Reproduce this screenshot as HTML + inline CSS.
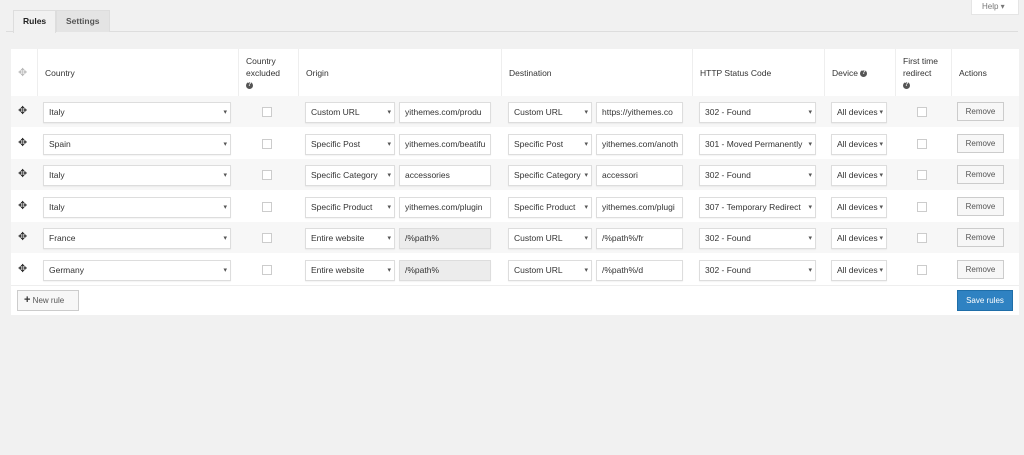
<!DOCTYPE html>
<html><head><meta charset="utf-8"><style>
*{box-sizing:border-box;margin:0;padding:0}
body{width:1024px;height:455px;background:#f1f1f1;font-family:"Liberation Sans",sans-serif;font-size:8.5px;color:#444;position:relative;overflow:hidden}
.a{position:absolute}
.tab{position:absolute;top:10px;height:22px;border:1px solid #ddd;border-bottom:none;line-height:21px;font-weight:bold;font-size:8.5px;padding:0 9px}
.line{position:absolute;left:6px;right:6px;top:31px;border-top:1px solid #ddd}
.tbl{position:absolute;left:11px;top:49px;width:1008px;height:266px;background:#fff}
.hd{position:absolute;top:0;height:47px;border-left:1px solid #eee;padding-left:7px;display:flex;align-items:center;line-height:12px;color:#333}
.q{display:inline-block;width:7px;height:7px;border-radius:50%;background:#555;color:#fff;font-size:6px;line-height:7px;text-align:center;font-weight:bold;vertical-align:middle}
.row{position:absolute;left:11px;width:1008px;height:31px}
.g{background:#f7f7f7}
.s,.i{position:absolute;top:6px;height:21px;background:#fff;border:1px solid #ddd;line-height:19px;padding-left:5px;white-space:nowrap;overflow:hidden;color:#333;box-shadow:0 1px 1px rgba(0,0,0,.05)}
.s{padding-right:10px}
.s:after{content:"▾";position:absolute;right:3px;top:0;font-size:7px;color:#555;background:#fff;padding-left:1px}
.i.dis{background:#ececec}
.cb{position:absolute;top:11px;width:10px;height:10px;border:1px solid #ccc;background:#fff}
.rm{position:absolute;top:6px;left:946px;width:47px;height:19px;border:1px solid #ccc;background:#f7f7f7;text-align:center;line-height:17px;color:#555;font-size:8px}
.mv{position:absolute;left:7px;top:9px;font-size:11px;color:#333;line-height:12px}
</style></head><body>
<div class="a" style="left:971px;top:0;width:48px;height:15px;background:#fff;border:1px solid #e5e5e5;border-top:none;color:#777;font-size:8px;line-height:13px;padding-left:10px">Help ▾</div>
<div class="line"></div>
<div class="tab" style="left:13px;background:#f1f1f1;height:23px;color:#222">Rules</div>
<div class="tab" style="left:56px;background:#e4e4e4;color:#555">Settings</div>

<div class="tbl">
 <div class="hd" style="left:0;width:26px;border:none;color:#bbb;font-size:11px;padding-left:7px">✥</div>
 <div class="hd" style="left:26px;width:201px">Country</div>
 <div class="hd" style="left:227px;width:60px"><div>Country<br>excluded<br><span class="q">?</span></div></div>
 <div class="hd" style="left:287px;width:203px">Origin</div>
 <div class="hd" style="left:490px;width:191px">Destination</div>
 <div class="hd" style="left:681px;width:132px">HTTP Status Code</div>
 <div class="hd" style="left:813px;width:71px"><div>Device <span class="q">?</span></div></div>
 <div class="hd" style="left:884px;width:56px"><div>First time<br>redirect<br><span class="q">?</span></div></div>
 <div class="hd" style="left:940px;width:68px">Actions</div>
</div>

<div class="row g" style="top:96px"><span class="mv">✥</span>
<div class="s" style="left:32px;width:188px">Italy</div><div class="cb" style="left:251px"></div>
<div class="s" style="left:294px;width:90px">Custom URL</div><div class="i" style="left:388px;width:92px">yithemes.com/produ</div>
<div class="s" style="left:497px;width:84px">Custom URL</div><div class="i" style="left:585px;width:87px">https://yithemes.co</div>
<div class="s" style="left:688px;width:117px">302 - Found</div><div class="s" style="left:820px;width:56px">All devices</div>
<div class="cb" style="left:906px"></div><div class="rm">Remove</div></div>

<div class="row" style="top:128px;background:#fff"><span class="mv">✥</span>
<div class="s" style="left:32px;width:188px">Spain</div><div class="cb" style="left:251px"></div>
<div class="s" style="left:294px;width:90px">Specific Post</div><div class="i" style="left:388px;width:92px">yithemes.com/beatifu</div>
<div class="s" style="left:497px;width:84px">Specific Post</div><div class="i" style="left:585px;width:87px">yithemes.com/anoth</div>
<div class="s" style="left:688px;width:117px">301 - Moved Permanently</div><div class="s" style="left:820px;width:56px">All devices</div>
<div class="cb" style="left:906px"></div><div class="rm">Remove</div></div>

<div class="row g" style="top:159px"><span class="mv">✥</span>
<div class="s" style="left:32px;width:188px">Italy</div><div class="cb" style="left:251px"></div>
<div class="s" style="left:294px;width:90px">Specific Category</div><div class="i" style="left:388px;width:92px">accessories</div>
<div class="s" style="left:497px;width:84px">Specific Category</div><div class="i" style="left:585px;width:87px">accessori</div>
<div class="s" style="left:688px;width:117px">302 - Found</div><div class="s" style="left:820px;width:56px">All devices</div>
<div class="cb" style="left:906px"></div><div class="rm">Remove</div></div>

<div class="row" style="top:191px;background:#fff"><span class="mv">✥</span>
<div class="s" style="left:32px;width:188px">Italy</div><div class="cb" style="left:251px"></div>
<div class="s" style="left:294px;width:90px">Specific Product</div><div class="i" style="left:388px;width:92px">yithemes.com/plugin</div>
<div class="s" style="left:497px;width:84px">Specific Product</div><div class="i" style="left:585px;width:87px">yithemes.com/plugi</div>
<div class="s" style="left:688px;width:117px">307 - Temporary Redirect</div><div class="s" style="left:820px;width:56px">All devices</div>
<div class="cb" style="left:906px"></div><div class="rm">Remove</div></div>

<div class="row g" style="top:222px"><span class="mv">✥</span>
<div class="s" style="left:32px;width:188px">France</div><div class="cb" style="left:251px"></div>
<div class="s" style="left:294px;width:90px">Entire website</div><div class="i dis" style="left:388px;width:92px">/%path%</div>
<div class="s" style="left:497px;width:84px">Custom URL</div><div class="i" style="left:585px;width:87px">/%path%/fr</div>
<div class="s" style="left:688px;width:117px">302 - Found</div><div class="s" style="left:820px;width:56px">All devices</div>
<div class="cb" style="left:906px"></div><div class="rm">Remove</div></div>

<div class="row" style="top:254px;background:#fff"><span class="mv">✥</span>
<div class="s" style="left:32px;width:188px">Germany</div><div class="cb" style="left:251px"></div>
<div class="s" style="left:294px;width:90px">Entire website</div><div class="i dis" style="left:388px;width:92px">/%path%</div>
<div class="s" style="left:497px;width:84px">Custom URL</div><div class="i" style="left:585px;width:87px">/%path%/d</div>
<div class="s" style="left:688px;width:117px">302 - Found</div><div class="s" style="left:820px;width:56px">All devices</div>
<div class="cb" style="left:906px"></div><div class="rm">Remove</div></div>

<div class="a" style="left:11px;top:285px;width:1008px;border-top:1px solid #eee"></div>
<div class="a" style="left:17px;top:290px;width:62px;height:21px;border:1px solid #ccc;background:#f7f7f7;line-height:19px;padding-left:6px;color:#555;font-size:8px"><b style="font-size:11px;color:#333">+</b> New rule</div>
<div class="a" style="left:957px;top:290px;width:56px;height:21px;background:#2f82c2;border:1px solid #1f6ea8;color:#fff;text-align:center;line-height:19px;font-size:8px">Save rules</div>
</body></html>
